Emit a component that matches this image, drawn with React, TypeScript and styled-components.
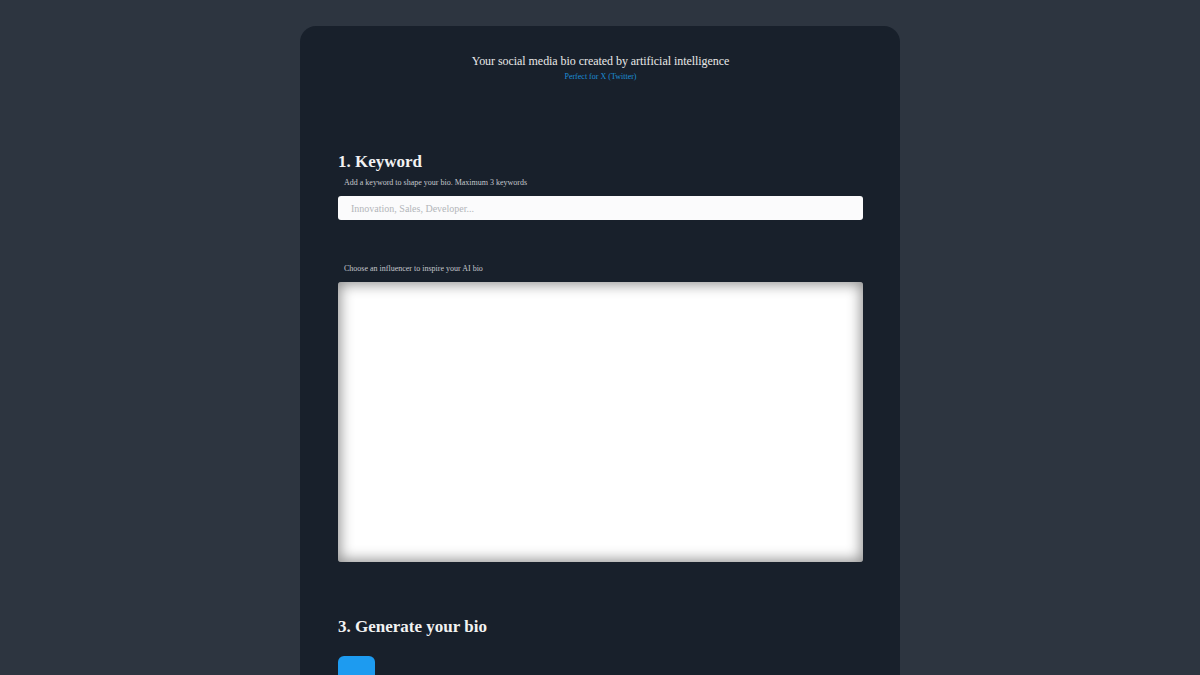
import styled, { createGlobalStyle } from "styled-components";

const GlobalStyle = createGlobalStyle`
  html, body {
    margin: 0;
    padding: 0;
    background-color: #2d3540;
    font-family: "Liberation Serif", "Times New Roman", serif;
  }
`;

function App() {
  return (
    <>
      <GlobalStyle />
      <Page>
        <Card>
          <Header>
            <Title>Your social media bio created by artificial intelligence</Title>
            <SubTitle>Perfect for X (Twitter)</SubTitle>
          </Header>

          <Section $gap={70}>
            <StepTitle>1. Keyword</StepTitle>
            <Hint>Add a keyword to shape your bio. Maximum 3 keywords</Hint>
            <KeywordInput placeholder="Innovation, Sales, Developer..." />
          </Section>

          <Section $gap={38}>
            <Hint>Choose an influencer to inspire your AI bio</Hint>
            <InfluencerBox />
          </Section>

          <Section $gap={55}>
            <StepTitle>3. Generate your bio</StepTitle>
            <GenerateButton />
          </Section>
        </Card>
      </Page>
    </>
  );
}

const Page = styled.div`
  display: flex;
  justify-content: center;
  padding-top: 26px;
  min-height: 675px;
  box-sizing: border-box;
`;

const Card = styled.div`
  width: 600px;
  box-sizing: border-box;
  padding: 28px 37px 40px 38px;
  background-color: #18202b;
  border-radius: 16px;
`;

const Header = styled.header`
  display: flex;
  flex-direction: column;
  align-items: center;
`;

const Title = styled.h1`
  margin: 0;
  font-size: 12px;
  font-weight: 400;
  line-height: 15px;
  letter-spacing: -0.05px;
  color: #e8e8e8;
`;

const SubTitle = styled.span`
  margin-top: 2px;
  font-size: 8px;
  line-height: 11px;
  color: #1d8fd8;
`;

const Section = styled.section<{ $gap: number }>`
  display: flex;
  flex-direction: column;
  margin-top: ${(props) => props.$gap}px;
`;

const StepTitle = styled.h2`
  margin: 0;
  font-size: 17px;
  font-weight: 700;
  line-height: 20px;
  color: #f2f2f2;
`;

const Hint = styled.p`
  margin: 6px 0 8px 6px;
  font-size: 8px;
  line-height: 10px;
  color: #c4c7cc;
`;

const KeywordInput = styled.input`
  height: 24px;
  box-sizing: border-box;
  border: none;
  border-radius: 3px;
  padding: 0 13px;
  background-color: #fbfbfc;
  font-family: "Liberation Serif", "Times New Roman", serif;
  font-size: 10px;
  outline: none;
  &::placeholder {
    color: #b3b6ba;
  }
`;

const InfluencerBox = styled.div`
  height: 280px;
  border-radius: 3px;
  background-color: #ffffff;
  box-shadow: inset 0 0 14px 2px rgba(0, 0, 0, 0.45);
`;

const GenerateButton = styled.button`
  margin-top: 19px;
  width: 37px;
  height: 40px;
  border: none;
  border-radius: 6px;
  background-color: #1d9bf0;
`;

export default App;
